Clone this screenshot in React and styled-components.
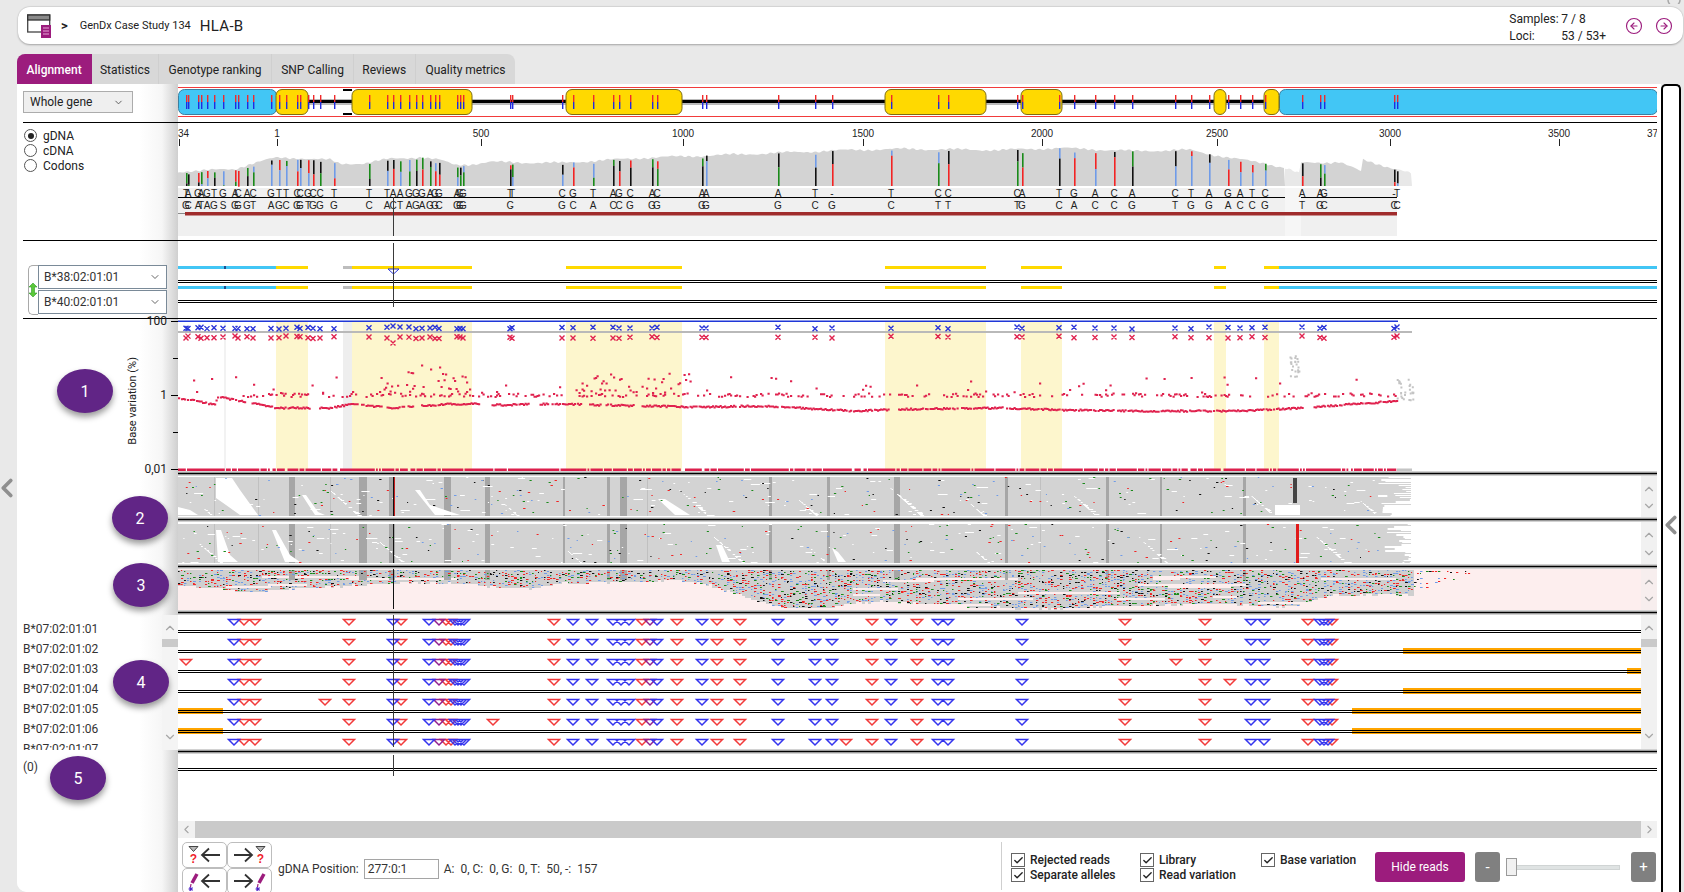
import React from "react";
import styled, { createGlobalStyle } from "styled-components";
import { Check, ChevronDown, ChevronLeft, ChevronRight, ChevronUp, CircleArrowLeft, CircleArrowRight } from "lucide-react";

const PURPLE = "#9c1c7d";
const CURSOR = 393;
const TRACK_W = 1479;

// x position + reference base + read base for each variant column
const VARIANTS = `186TG 188AC 198GA 201AT 207GA 214TG 223GS 235AG 238CG 247AG 253CT 271GA 279TG 286TC 297CG 300CG 308GT 313CG 320CG 334TG
369TC 387TA 393AC 400AT 409GA 416GG 422GA 430AG 435GG 439GC 457AG 460GG 463GG 510TC 512T- 562CG 573GC 593TA 613AC 619GC 630CG 652AG 657CG 702AG 706AG
778AG 815TC 832-G 891TC 938CT 948CT 1017CT 1022AG 1059TC 1074GA 1095AC 1114CC 1132AG 1175CT 1191TG 1209AG 1228GA 1240AC 1252TC 1265CG 1302AT 1320AG 1324GC 1394-C 1397TC`
  .split(/\s+/)
  .map((v) => ({ x: parseInt(v, 10), top: v.slice(-2, -1), bottom: v.slice(-1) }));

const EXONS = [
  [276, 308],
  [352, 472],
  [566, 682],
  [885, 986],
  [1021, 1062],
  [1214, 1226],
  [1264, 1279],
];

const TICKS = [
  [179, "34"],
  [277, "1"],
  [481, "500"],
  [683, "1000"],
  [863, "1500"],
  [1042, "2000"],
  [1217, "2500"],
  [1390, "3000"],
  [1559, "3500"],
];

const COVERAGE = [
  [178, 172], [186, 171], [215, 170], [235, 169], [250, 164], [262, 161], [275, 158], [300, 158], [330, 160], [340, 164],
  [365, 163], [390, 159], [420, 157], [440, 160], [455, 165], [475, 164], [490, 162], [560, 163], [640, 158], [750, 154],
  [850, 150], [900, 149], [1000, 150], [1060, 148], [1132, 151], [1190, 150], [1230, 158], [1264, 163], [1285, 168],
  [1300, 174], [1301, 163], [1340, 162], [1362, 172], [1363, 160], [1400, 170], [1412, 174],
];

const READ_ENVELOPE = [
  [178, 584], [250, 592], [290, 588], [330, 586], [400, 582], [470, 583], [520, 590], [560, 582], [680, 580], [700, 582],
  [780, 607], [820, 607], [880, 600], [960, 606], [1040, 608], [1100, 606], [1200, 603], [1290, 606], [1330, 594], [1411, 594],
  [1430, 584], [1440, 581], [1465, 577], [1470, 570],
];

const TRIANGLES = [
  [234, "b"], [244, "r"], [255, "r"], [349, "r"], [393, "b"], [401, "r"], [429, "b"], [439, "p"], [446, "r"], [451, "r"], [455, "b"],
  [458, "b"], [461, "b"], [464, "b"], [554, "r"], [573, "b"], [592, "b"], [613, "b"], [621, "b"], [629, "b"], [642, "r"], [650, "p"],
  [657, "b"], [677, "r"], [702, "b"], [717, "r"], [740, "r"], [778, "b"], [815, "b"], [832, "b"], [872, "r"], [891, "b"], [917, "r"],
  [938, "b"], [948, "b"], [1022, "b"], [1125, "r"], [1205, "r"], [1251, "b"], [1264, "b"], [1308, "r"], [1320, "b"], [1324, "b"],
  [1328, "b"], [1332, "r"],
];

const EXTRA_TRIANGLES = [[], [], [186, 1176], [1230], [325], [493], [846]];

const ALLELE_ROWS = ["B*07:02:01:01", "B*07:02:01:02", "B*07:02:01:03", "B*07:02:01:04", "B*07:02:01:05", "B*07:02:01:06", "B*07:02:01:07"];

const ORANGE_BARS = [
  [1403, 651],
  [1627, 671],
  [1403, 691],
  [1352, 711],
  [1352, 731],
];

const DARK_BARS = [
  [214, 1], [258, 1], [289, 6], [330, 1], [359, 8], [389, 6], [444, 7], [485, 5], [563, 2], [607, 3], [620, 7], [647, 1], [769, 3],
  [827, 3], [894, 6], [1005, 3], [1040, 1], [1106, 3], [1160, 2], [1243, 3],
];

const BLOBS_A = [
  "216,478 232,478 240,490 258,515 240,515 226,505 216,498",
  "178,507 190,510 198,515 178,515",
  "302,495 306,495 318,512 325,515 315,515",
  "415,490 420,490 430,505 460,515 435,515",
  "658,499 665,499 690,515 675,515",
  "1275,505 1300,505 1300,515 1275,515",
];

const BLOBS_B = [
  "216,530 221,530 230,555 238,562 218,562",
  "272,530 276,530 290,555 300,562 285,562",
  "716,545 722,545 730,562 722,562",
  "832,548 838,552 846,562 838,562",
];

const makeRandom = (seed) => () => {
  seed = (seed + 0x6d2b79f5) | 0;
  let t = Math.imul(seed ^ (seed >>> 15), 1 | seed);
  t = (t + Math.imul(t ^ (t >>> 7), 61 | t)) ^ t;
  return ((t ^ (t >>> 14)) >>> 0) / 4294967296;
};

const lerp = (table, x) => {
  for (let i = 1; i < table.length; i++) {
    if (x <= table[i][0]) {
      const [x0, y0] = table[i - 1];
      const [x1, y1] = table[i];
      return y0 + ((y1 - y0) * (x - x0)) / (x1 - x0 || 1);
    }
  }
  return table[table.length - 1][1];
};

const box = (x, y, w, h) => `M${x.toFixed(1)} ${y.toFixed(1)}h${w.toFixed(1)}v${h}h${(-w).toFixed(1)}z`;
const cross = (x, y) => `M${x - 2.5} ${y - 2.5}l5 5M${x + 2.5} ${y - 2.5}l-5 5`;

const coverageArea = (from, to) => {
  const points = [];
  for (let x = from; x <= to; x += 2) {
    const bump = Math.sin(x * 0.7) * 0.5 + Math.sin(x * 2.3) * 0.4 + Math.sin(x * 0.11) * 0.8;
    points.push(`${x},${(lerp(COVERAGE, x) + bump).toFixed(1)}`);
  }
  return `${from},186 ${points.join(" ")} ${to},186`;
};

const coverageBars = (() => {
  const random = makeRandom(11);
  const colors = ["#111", "#f22424", "#1a8a1a", "#6f9be8"];
  return VARIANTS.map(({ x }) => {
    const top = lerp(COVERAGE, x) + random() * 4;
    const split = top + 4 + random() * 12;
    const first = Math.floor(random() * 4);
    const second = (first + 1 + Math.floor(random() * 3)) % 4;
    return { x, top, split, upper: colors[first], lower: colors[second] };
  });
})();

const chartDots = (() => {
  const random = makeRandom(23);
  let red = "";
  let grey = "";
  let line = "";
  const lower = [
    [178, 397], [215, 404], [216, 396], [240, 400], [260, 404], [276, 407], [330, 407], [350, 403], [390, 407], [450, 403],
    [472, 403], [500, 404], [560, 403], [640, 405], [700, 406], [760, 405], [800, 407], [850, 410], [920, 408], [1000, 407],
    [1060, 409], [1140, 410], [1240, 410], [1300, 407], [1397, 400],
  ];
  let gapUntil = 0;
  for (let x = 178; x < 1397; x += 1.5) {
    if (x > gapUntil && random() < 0.012) gapUntil = x + 3 + random() * 9;
    if (x > gapUntil && random() < 0.9) red += box(x, lerp(lower, x) + (random() - 0.5) * 1.6, 2.2, 2);
    if (x > 240 && random() < 0.34) red += box(x, 392.5 + random() * 3.5, 2.2, 2);
    if (random() < 0.075) red += box(x, 376 + random() * 18, 2.2, 2);
    const clouds = (x > 378 && x < 472 ? 0.95 : 0) + (x > 570 && x < 690 ? 0.8 : 0);
    if (random() < clouds * 0.55) {
      const reach = x < 472 ? 38 : 20;
      const peak = x < 472 ? 1 - Math.abs(x - 430) / 60 : 1;
      red += box(x, 392 - random() * reach * Math.max(peak, 0.2), 2.2, 2);
    }
    if (random() < 0.88) line += box(x, 468.5, 1.8, 3);
  }
  for (let i = 0; i < 22; i++) grey += box(1289 + random() * 11, 354 + random() * 22, 2, 2);
  for (let i = 0; i < 26; i++) grey += box(1396 + random() * 17, 378 + random() * 22, 2, 2);
  return { red, grey, line };
})();

const chartCrosses = (() => {
  const random = makeRandom(31);
  let blue = "";
  let red = "";
  VARIANTS.forEach(({ x }) => {
    const shift = x === CURSOR ? -2 : random() * 2 - 1;
    blue += cross(x, 328 + shift);
    red += cross(x, x === CURSOR ? 343 : 337 + random() * 2.5 - 1);
  });
  return { blue, red };
})();

const makeReads = (seed, bottom) => {
  const random = makeRandom(seed);
  const height = 39;
  const top = bottom - height;
  let white = "";
  const dots = { "#f22424": "", "#111": "", "#1a8a1a": "", "#6f9be8": "" };
  const colors = Object.keys(dots);
  for (let i = 0; i < 130; i++) {
    white += box(178 + random() * 1230, top + Math.floor(random() * height), 1 + random() * random() * 12, 1);
  }
  // faint diagonal gaps where the read starts shift along the gene
  for (let start = 200; start < 1400; start += 70 + random() * 120) {
    const from = top + 8 + Math.floor(random() * 22);
    for (let y = from; y < bottom; y += 1) {
      if (random() < 0.35) continue;
      const w = 1 + random() * (y - from) * 0.28;
      white += box(start + (y - from) * 1.1, y, w, 1);
    }
  }
  for (let y = top; y < bottom; y += 2) {
    const w = 1 + random() * 34;
    white += box(1411 - w, y, w, 1 + Math.round(random()));
  }
  for (let i = 0; i < 210; i++) {
    const color = colors[Math.floor(random() * 4)];
    dots[color] += box(178 + random() * 1200, top + Math.floor(random() * height), 1 + random() * 1.5, 1);
  }
  return { white, dots, top };
};

const readsA = makeReads(41, 516);
const readsB = makeReads(52, 563);

const readsC = (() => {
  const random = makeRandom(63);
  let grey = "";
  const dots = { "#f22424": "", "#111": "", "#1a8a1a": "", "#6f9be8": "" };
  const colors = ["#f22424", "#f22424", "#111", "#1a8a1a", "#6f9be8", "#6f9be8"];
  for (let y = 570; y < 609; y += 2) {
    let gapFrom = -1;
    let gapTo = -1;
    const tailRow = random() < 0.45;
    for (let x = 178; x < 1470; x += 3) {
      if (x > gapTo && random() < 0.007) {
        gapFrom = x;
        gapTo = x + 20 + random() * 90;
      }
      if (y > lerp(READ_ENVELOPE, x) + (random() - 0.5) * 2) continue;
      if (x >= gapFrom && x < gapTo && y > 574) continue;
      if (x > 1411 && !tailRow) continue;
      if (x <= 1411) grey += box(x, y, 3, 2);
      const depth = x > 1411 ? 0.35 : 0.5;
      if (random() < depth) {
        const color = colors[Math.floor(random() * colors.length)];
        dots[color] += box(x, y + (random() < 0.5 ? 0 : 1), 1 + random() * 2, 1);
      }
    }
  }
  return { grey, dots };
})();

const triangle = (x, y) => `M${x - 5.5} ${y}h11l-5.500 5.500z`;

const trianglesByColor = (() => {
  const paths = { r: "", b: "", p: "" };
  for (let row = 0; row < 7; row++) {
    const y = 619.5 + row * 20;
    TRIANGLES.forEach(([x, c]) => {
      paths[c] += triangle(x, y);
    });
  }
  EXTRA_TRIANGLES.forEach((xs, row) => {
    xs.forEach((x) => {
      paths.r += triangle(x, 619.5 + row * 20);
    });
  });
  return paths;
})();

const GlobalStyle = createGlobalStyle`
  html, body {
    margin: 0;
    background: #e9e9e9;
    overflow: hidden;
  }
  body {
    font-family: "Roboto", "Liberation Sans", sans-serif;
    font-size: 12px;
    color: #222;
  }
`;

const Page = styled.div`
  position: relative;
  width: 1684px;
  height: 892px;
  overflow: hidden;
  background: #e9e9e9;
`;

const Header = styled.header`
  display: flex;
  align-items: center;
  height: 37px;
  margin: 7px 1px 0 18px;
  padding: 0 10px 0 9px;
  background: #fff;
  border-radius: 12px;
  box-shadow: 0 1px 2px rgba(0, 0, 0, 0.3), 0 -1px 1px rgba(0, 0, 0, 0.08);
`;

const Crumb = styled.span`
  margin-left: 9px;
  font-size: 13px;
  font-weight: 700;
`;

const CaseName = styled.span`
  margin-left: 12px;
  font-size: 11px;
`;

const LocusName = styled.span`
  margin-left: 9px;
  font-size: 15px;
  letter-spacing: 0.3px;
`;

const Counters = styled.div`
  display: grid;
  grid-template-columns: 52px auto;
  grid-auto-rows: 17px;
  align-items: center;
  margin-left: auto;
  padding-top: 3px;
  font-size: 12px;
`;

const NavRound = styled.span`
  display: flex;
  margin-left: ${(p) => p.$gap}px;
  color: ${PURPLE};
`;

const Tabs = styled.nav`
  display: flex;
  width: 498px;
  height: 30px;
  margin: 10px 0 0 17px;
  background: #d8d8d8;
  border-radius: 8px 8px 0 0;
`;

const Tab = styled.span`
  display: flex;
  align-items: center;
  justify-content: center;
  width: ${(p) => p.$w}px;
  padding-top: 1px;
  font-size: 12px;
  color: ${(p) => (p.$active ? "#fff" : "#222")};
  font-weight: ${(p) => (p.$active ? 500 : 400)};
  background: ${(p) => (p.$active ? PURPLE : "transparent")};
  border-radius: ${(p) => (p.$active ? "8px 0 0 0" : "0")};
  border-right: 1px solid ${(p) => (p.$active ? "transparent" : "#cfcfcf")};
  &:last-child {
    border-right: 0;
  }
`;

const Body = styled.div`
  display: flex;
  height: 808px;
`;

const Gutter = styled.div`
  display: flex;
  align-items: center;
  justify-content: center;
  width: 17px;
  padding-right: 3px;
  box-sizing: border-box;
  color: #8f8f8f;
  svg {
    flex-shrink: 0;
  }
`;

const Workspace = styled.div`
  display: flex;
  width: 1644px;
  background: #fff;
  border-radius: 0 0 0 10px;
  overflow: hidden;
`;

const LeftColumn = styled.aside`
  display: flex;
  flex-direction: column;
  width: 161px;
  flex-shrink: 0;
  background: linear-gradient(90deg, #fff 76%, #f6f6f6 90%, #cfcfcf 100%);
`;

const LeftBlock = styled.div`
  height: ${(p) => p.$h}px;
  margin-left: 6px;
  flex-shrink: 0;
  border-bottom: 1px solid #000;
`;

const GeneSelect = styled.div`
  display: flex;
  align-items: center;
  justify-content: space-between;
  width: 110px;
  height: 22px;
  margin-top: 7px;
  padding: 0 8px 0 6px;
  box-sizing: border-box;
  background: #efefef;
  border: 1px solid #acacac;
  font-size: 12px;
`;

const RadioGroup = styled.div`
  display: flex;
  flex-direction: column;
  padding: 5px 0 0 1px;
`;

const RadioRow = styled.label`
  display: flex;
  align-items: center;
  gap: 6px;
  height: 15px;
  font-size: 12px;
`;

const RadioMark = styled.span`
  display: flex;
  align-items: center;
  justify-content: center;
  width: 11px;
  height: 11px;
  border: 1px solid #555;
  border-radius: 50%;
  &::after {
    content: "";
    width: 6px;
    height: 6px;
    border-radius: 50%;
    background: ${(p) => (p.$on ? "#222" : "transparent")};
  }
`;

const PairRow = styled.div`
  display: flex;
  margin: 24px 0 0 5px;
`;

const PairBracket = styled.div`
  position: relative;
  width: 9px;
  height: 48px;
  border: 1px solid #a9a9a9;
  border-right: 0;
  border-radius: 5px 0 0 5px;
`;

const SwapIcon = styled.svg`
  position: absolute;
  left: -1px;
  top: 17px;
`;

const PairSelects = styled.div`
  display: flex;
  flex-direction: column;
  gap: 1px;
`;

const AlleleSelect = styled.div`
  display: flex;
  align-items: center;
  justify-content: space-between;
  width: 129px;
  height: 24px;
  padding: 0 5px 0 5px;
  box-sizing: border-box;
  border: 1px solid #7a8a98;
  font-size: 12px;
  color: #333;
  background: #fff;
`;

const AxisBlock = styled.div`
  display: flex;
  justify-content: flex-end;
  align-items: center;
  height: 164px;
  margin-top: -6px;
`;

const AxisTitle = styled.span`
  writing-mode: vertical-rl;
  transform: rotate(180deg);
  width: 14px;
  margin-top: 12px;
  font-size: 11px;
  white-space: nowrap;
`;

const AxisColumn = styled.div`
  display: flex;
  flex-direction: column;
  justify-content: space-between;
  width: 38px;
  height: 100%;
`;

const AxisRow = styled.div`
  display: flex;
  align-items: center;
  justify-content: flex-end;
  gap: 4px;
  height: 16px;
  font-size: 12px;
  &::after {
    content: "";
    width: ${(p) => (p.$minor ? 5 : 7)}px;
    height: 1px;
    background: #000;
  }
`;

const LeftSpacer = styled.div`
  flex-shrink: 0;
  height: ${(p) => p.$h}px;
`;

const ListBlock = styled.div`
  display: flex;
  flex-shrink: 0;
  height: 135px;
  margin-left: 6px;
`;

const AlleleList = styled.div`
  flex: 1;
  padding-top: 4px;
  overflow: hidden;
`;

const AlleleName = styled.div`
  display: flex;
  align-items: center;
  height: 20px;
  font-size: 12px;
  color: #333;
`;

const ScrollStrip = styled.div`
  display: flex;
  flex-direction: column;
  align-items: center;
  justify-content: space-between;
  flex-shrink: 0;
  width: 16px;
  padding: ${(p) => (p.$list ? "6px 0" : "6px 0 4px")};
  box-sizing: border-box;
  background: ${(p) => p.$bg || "#f1f1f1"};
  color: #a6a6a6;
`;

const ScrollGroup = styled.div`
  display: flex;
  flex-direction: column;
  align-items: center;
  width: 100%;
`;

const ScrollThumb = styled.span`
  align-self: stretch;
  height: 8px;
  margin-top: 4px;
  background: #cacaca;
`;

const LeftNote = styled.div`
  margin: 10px 0 0 6px;
  font-size: 12px;
  color: #333;
`;

const TrackColumn = styled.main`
  display: flex;
  flex-direction: column;
  width: ${TRACK_W}px;
  flex-shrink: 0;
`;

const TrackSvg = styled.svg`
  display: block;
  flex-shrink: 0;
`;

const TrackRule = styled.div`
  flex-shrink: 0;
  height: 1px;
  background: #000;
`;

const Splitter = styled.div`
  flex-shrink: 0;
  height: 5px;
  background: linear-gradient(#d2d2d2 0 1px, #9a9a9a 1px 2px, #000 2px 3px, #9a9a9a 3px 4px, #d2d2d2 4px 5px);
`;

const TrackRow = styled.div`
  display: flex;
  flex-shrink: 0;
  background: ${(p) => p.$bg || "#fff"};
`;

const TrackFill = styled.div`
  flex: 1;
  min-height: 0;
  background: #fff;
`;

const HScroll = styled.div`
  display: flex;
  flex-shrink: 0;
  height: 17px;
  background: #cacaca;
  color: #a6a6a6;
`;

const HScrollEnd = styled.span`
  display: flex;
  align-items: center;
  justify-content: center;
  width: ${(p) => p.$w}px;
  background: #f1f1f1;
  margin-left: ${(p) => (p.$right ? "auto" : 0)};
`;

const Toolbar = styled.div`
  display: flex;
  flex-shrink: 0;
  height: 54px;
  background: #fff;
  overflow: hidden;
`;

const NavGrid = styled.div`
  display: grid;
  grid-template-columns: 45px 45px;
  grid-auto-rows: 26px;
  margin: 4px 0 0 4px;
`;

const NavButton = styled.button`
  display: flex;
  align-items: center;
  justify-content: center;
  gap: 1px;
  padding: 0;
  background: #fff;
  border: 1px solid #bdbdbd;
  border-radius: 5px;
  color: #333;
`;

const PositionGroup = styled.div`
  display: flex;
  align-items: center;
  height: 54px;
  padding-top: 8px;
  box-sizing: border-box;
  margin-left: 6px;
  font-size: 12px;
  color: #333;
`;

const PositionInput = styled.div`
  display: flex;
  align-items: center;
  width: 75px;
  height: 20px;
  margin: 0 5px 0 5px;
  padding-left: 3px;
  box-sizing: border-box;
  border: 1px solid #a5a5a5;
`;

const Stats = styled.span`
  white-space: pre;
`;

const ToolbarRight = styled.div`
  display: flex;
  align-items: center;
  width: 656px;
  height: 48px;
  margin: 4px 0 0 auto;
  padding-left: 9px;
  box-sizing: border-box;
  border-left: 1px solid #cfcfcf;
`;

const CheckGrid = styled.div`
  display: grid;
  grid-template-columns: 129px 121px 114px;
  grid-auto-rows: 15px;
  margin-top: 3px;
`;

const CheckRow = styled.label`
  display: flex;
  align-items: center;
  gap: 5px;
  font-size: 12px;
  font-weight: 500;
  color: #222;
`;

const CheckMark = styled.span`
  display: flex;
  align-items: center;
  justify-content: center;
  width: 12px;
  height: 12px;
  border: 1px solid #666;
  color: #222;
`;

const HideButton = styled.button`
  width: 90px;
  height: 30px;
  margin-top: 2px;
  border: 0;
  border-radius: 3px;
  background: ${PURPLE};
  color: #fff;
  font: inherit;
  font-size: 12px;
`;

const ZoomButton = styled.button`
  width: 25px;
  height: 30px;
  margin: 2px ${(p) => p.$mr || 0}px 0 ${(p) => p.$ml || 0}px;
  padding: 0;
  border: 0;
  border-radius: 3px;
  background: #808080;
  color: #fff;
  font: inherit;
  font-size: 15px;
`;

const SliderTrack = styled.div`
  position: relative;
  display: flex;
  align-items: center;
  width: 114px;
  height: 18px;
  margin-top: 2px;
  &::before {
    content: "";
    flex: 1;
    height: 3px;
    background: #dfe3e3;
    border: 1px solid #d0d4d4;
  }
`;

const SliderThumb = styled.span`
  position: absolute;
  left: 0;
  top: 0;
  width: 11px;
  height: 18px;
  box-sizing: border-box;
  background: #f1f1f1;
  border: 1px solid #9a9a9a;
`;

const Rail = styled.div`
  display: flex;
  justify-content: center;
  width: 20px;
  padding-top: 424px;
  box-sizing: border-box;
  background: #fff;
  border: 2px solid #000;
  border-bottom: 0;
  border-radius: 5px 5px 0 0;
  color: #8f8f8f;
  svg {
    flex-shrink: 0;
  }
`;

const Badge = styled.div`
  position: absolute;
  left: ${(p) => p.$x - 28}px;
  top: ${(p) => p.$y - 22}px;
  display: flex;
  align-items: center;
  justify-content: center;
  width: 56px;
  height: 44px;
  border-radius: 50%;
  background: #612586;
  color: #fff;
  font-size: 16px;
  box-shadow: 0 4px 6px rgba(0, 0, 0, 0.4);
`;

const CornerMark = styled.svg`
  position: absolute;
  right: 3px;
  top: 0;
`;

const Cursor = ({ from, to }) => <rect x={CURSOR} y={from} width="1" height={to - from} fill="#3a3a3a" />;

const Exon = ({ from, to }) => <rect x={from} y="89.500" width={to - from} height="25" rx="6" fill="#ffd900" stroke="#7c6c14" />;

const GeneTrack = () => (
  <TrackSvg width={TRACK_W} height="38" viewBox="178 84 1479 38">
    <rect x="178" y="87" width="1479" height="1" fill="#f23b3b" />
    <rect x="178" y="116" width="1479" height="1" fill="#f23b3b" />
    <rect x="308" y="99" width="971" height="6" fill="#bbb" />
    <rect x="308" y="100" width="971" height="3" fill="#000" />
    <rect x="343" y="89" width="9" height="2" fill="#000" />
    <rect x="343" y="113" width="9" height="2" fill="#000" />
    <rect x="178.500" y="89.500" width="98" height="25" rx="6" fill="#42c6f5" stroke="#3a7fa0" />
    <rect x="1279.500" y="89.500" width="378" height="25" rx="6" fill="#42c6f5" stroke="#3a7fa0" />
    {EXONS.map(([from, to]) => (
      <Exon key={from} from={from} to={to} />
    ))}
    {VARIANTS.map(({ x }) => (
      <g key={x}>
        <rect x={x} y="95" width="1.400" height="7" fill="#ef2b2b" />
        <rect x={x} y="102" width="1.400" height="7" fill="#1f2be0" />
      </g>
    ))}
  </TrackSvg>
);

const SequenceTrack = () => (
  <TrackSvg width={TRACK_W} height="117" viewBox="178 123 1479 117">
    <g fontFamily="Liberation Sans" fontSize="10" fill="#222">
      {TICKS.map(([x, label]) => (
        <g key={label}>
          <text x={x === 179 ? 178 : x} y="137" textAnchor={x === 179 ? "start" : "middle"}>
            {label}
          </text>
          <rect x={x} y="139" width="1" height="7" fill="#222" />
        </g>
      ))}
      <text x="1647" y="137">37</text>
    </g>
    <polygon points={coverageArea(178, 1285)} fill="#d3d3d3" />
    <polygon points={coverageArea(1285, 1301)} fill="#e8e8e8" />
    <polygon points={coverageArea(1301, 1397)} fill="#d3d3d3" />
    <polygon points={coverageArea(1397, 1412)} fill="#e8e8e8" />
    {coverageBars.map((b) => (
      <g key={b.x}>
        <rect x={b.x} y={b.top} width="1.600" height={b.split - b.top} fill={b.upper} />
        <rect x={b.x} y={b.split} width="1.600" height={186 - b.split} fill={b.lower} />
      </g>
    ))}
    <rect x="178" y="188" width="1107" height="48" fill="#f0f0f0" />
    <rect x="1285" y="188" width="16" height="48" fill="#f6f6f6" />
    <rect x="1301" y="188" width="96" height="48" fill="#f0f0f0" />
    <g fontFamily="Liberation Sans" fontSize="10" fill="#222" textAnchor="middle">
      {VARIANTS.map(({ x, top, bottom }) => (
        <g key={x}>
          <text x={x} y="197">{top}</text>
          <text x={x} y="209">{bottom}</text>
        </g>
      ))}
    </g>
    <rect x="178" y="197" width="1107" height="1" fill="#000" />
    <rect x="1301" y="197" width="96" height="1" fill="#000" />
    <rect x="178" y="213" width="7" height="1" fill="#8a8a8a" />
    <rect x="185" y="212" width="1212" height="3.500" fill="#a02c2c" />
    <Cursor from={197} to={236} />
  </TrackSvg>
);

const AlleleBar = ({ y }) => (
  <g>
    <rect x="178" y={y} width="98" height="3" fill="#42c6f5" />
    <rect x="224" y={y} width="2" height="3" fill="#1d4f8f" />
    <rect x="343" y={y} width="9" height="3" fill="#bdbdbd" />
    <rect x="1279" y={y} width="378" height="3" fill="#42c6f5" />
    {EXONS.map(([from, to]) => (
      <rect key={from} x={from} y={y} width={to - from} height="3" fill="#ffd900" />
    ))}
    <rect x="178" y={y + 14} width="1479" height="1" fill="#000" />
    <rect x="178" y={y + 16} width="1479" height="1" fill="#000" />
  </g>
);

const AlleleTrack = () => (
  <TrackSvg width={TRACK_W} height="77" viewBox="178 241 1479 77">
    <AlleleBar y={266} />
    <AlleleBar y={286} />
    <path d="M388 269h11l-5.500 5z" fill="none" stroke="#2a35d8" strokeWidth="1" />
    <Cursor from={243} to={307} />
  </TrackSvg>
);

const ChartTrack = () => (
  <TrackSvg width={TRACK_W} height="152" viewBox="178 319 1479 152">
    <rect x="224" y="321" width="2" height="150" fill="#f2f2f2" />
    <rect x="343" y="321" width="9" height="150" fill="#eeeeee" />
    {EXONS.map(([from, to]) => (
      <rect key={from} x={from} y="321" width={to - from} height="150" fill="#fdf6cd" />
    ))}
    <rect x="178" y="320.500" width="1220" height="1.500" fill="#2038d8" />
    <rect x="178" y="331" width="1234" height="2" fill="#b9b9b9" />
    <path d={chartCrosses.blue} fill="none" stroke="#2a35d8" strokeWidth="1.400" />
    <path d={chartCrosses.red} fill="none" stroke="#e0224e" strokeWidth="1.400" />
    <path d={chartDots.red} fill="#e0224e" />
    <path d={chartDots.grey} fill="#c4c4c4" />
    <path d={chartDots.line} fill="#dc1f4c" />
    <rect x="1397" y="468.500" width="15" height="3" fill="#c4c4c4" />
  </TrackSvg>
);

const ReadsTrack = ({ reads, bottom, height, blobs, accent, children }) => (
  <TrackSvg width="1463" height={height} viewBox={`178 ${bottom - height} 1463 ${height}`}>
    <rect x="178" y={reads.top} width="1233" height="39" fill="#d3d3d3" />
    {DARK_BARS.map(([x, w]) => (
      <rect key={x} x={x} y={reads.top} width={w} height="39" fill={w > 1 ? "#a6a6a6" : "#c0c0c0"} />
    ))}
    {blobs.map((points) => (
      <polygon key={points} points={points} fill="#fff" />
    ))}
    <path d={reads.white} fill="#fff" />
    {Object.entries(reads.dots).map(([color, d]) => (
      <path key={color} d={d} fill={color} />
    ))}
    {children}
    <rect x={CURSOR} y={reads.top} width="1" height="39" fill="#111" />
    {accent && <rect x={CURSOR + 1} y={reads.top} width="1" height="39" fill="#c81f1f" />}
  </TrackSvg>
);

const ReadsScroll = ({ bg }) => (
  <ScrollStrip $bg={bg}>
    <ChevronUp size={14} />
    <ChevronDown size={14} />
  </ScrollStrip>
);

const MappedReads = () => (
  <TrackSvg width="1463" height="41" viewBox="178 569 1463 41">
    <path d={readsC.grey} fill="#cfcfcf" />
    {DARK_BARS.filter(([, w]) => w > 2).map(([x, w]) => (
      <rect key={x} x={x} y="570" width={w} height="10" fill="#a6a6a6" />
    ))}
    {Object.entries(readsC.dots).map(([color, d]) => (
      <path key={color} d={d} fill={color} />
    ))}
    <rect x={CURSOR} y="569" width="1" height="40" fill="#111" />
  </TrackSvg>
);

const TriangleList = () => (
  <TrackSvg width="1463" height="134" viewBox="178 615 1463 134">
    {ORANGE_BARS.map(([x, y]) => (
      <rect key={y} x={x} y={y - 3} width={1641 - x} height="6" fill="#ffa500" />
    ))}
    <rect x="178" y="708" width="45" height="6" fill="#ffa500" />
    <rect x="178" y="728" width="45" height="6" fill="#ffa500" />
    {[631, 651, 671, 691, 711, 731].map((y) => (
      <g key={y}>
        <rect x="178" y={y - 1} width="1463" height="1" fill="#000" />
        <rect x="178" y={y + 1} width="1463" height="1" fill="#000" />
      </g>
    ))}
    <path d={trianglesByColor.r} fill="none" stroke="#f23a3a" strokeWidth="1.500" />
    <path d={trianglesByColor.p} fill="none" stroke="#93208f" strokeWidth="1.500" />
    <path d={trianglesByColor.b} fill="none" stroke="#3535ee" strokeWidth="1.500" />
    <Cursor from={615} to={747} />
  </TrackSvg>
);

const EmptyTrack = () => (
  <TrackSvg width={TRACK_W} height="23" viewBox="178 754 1479 23">
    <rect x="178" y="768" width="1479" height="1" fill="#000" />
    <rect x="178" y="770" width="1479" height="1" fill="#000" />
    <Cursor from={755} to={776} />
  </TrackSvg>
);

const NavArrow = ({ flip }) => (
  <svg width="21" height="16" viewBox="0 0 21 16" aria-hidden="true">
    <path
      d={flip ? "M1 8h18M12 1.500L19 8l-7 6.500" : "M20 8H2M9 1.500L2 8l7 6.500"}
      fill="none"
      stroke="#333"
      strokeWidth="1.800"
    />
  </svg>
);

const QueryIcon = () => (
  <svg width="11" height="21" viewBox="0 0 11 21" aria-hidden="true">
    <path d="M1 1.500h9l-4.500 5z" fill="#b9b9b9" stroke="#444" strokeWidth="1" />
    <text x="5.500" y="17.500" textAnchor="middle" fontFamily="Liberation Sans" fontSize="12" fontWeight="700" fill="#f01f2e">?</text>
  </svg>
);

const PenIcon = () => (
  <svg width="11" height="21" viewBox="0 0 11 21" aria-hidden="true">
    <path d="M4 12L9 3" stroke={PURPLE} strokeWidth="3.500" fill="none" />
    <path d="M3 13l-.5 3" stroke={PURPLE} strokeWidth="1.200" />
    <path d="M.5 18h4.500M2.700 16v4M1 16.500l3.500 3M4.500 16.500l-3.500 3" stroke="#4a20c8" strokeWidth="1" />
  </svg>
);

const Checkbox = ({ label }) => (
  <CheckRow>
    <CheckMark>
      <Check size={11} strokeWidth={3} />
    </CheckMark>
    {label}
  </CheckRow>
);

const App = () => (
  <Page>
    <GlobalStyle />
    <CornerMark width="14" height="4" viewBox="0 0 14 4">
      <path d="M1 0a6 6 0 0 0 12 0" fill="none" stroke="#a8a8a8" strokeWidth="1.500" />
    </CornerMark>
    <Header>
      <svg width="25" height="24" viewBox="0 0 25 24" aria-hidden="true">
        <rect x="0.700" y="1" width="22" height="17" fill="#fff" stroke="#444" strokeWidth="1.300" />
        <rect x="0.700" y="1" width="22" height="5" fill="#8a8a8a" stroke="#333" strokeWidth="1.300" />
        <rect x="14" y="11" width="10" height="13" fill={PURPLE} />
        <path d="M16 14h6M16 17h6M16 20h6" stroke="#e6a8d8" strokeWidth="1" />
      </svg>
      <Crumb>&gt;</Crumb>
      <CaseName>GenDx Case Study 134</CaseName>
      <LocusName>HLA-B</LocusName>
      <Counters>
        <span>Samples:</span>
        <span>7 / 8</span>
        <span>Loci:</span>
        <span>53 / 53+</span>
      </Counters>
      <NavRound $gap={19}>
        <CircleArrowLeft size={18} strokeWidth={1.5} />
      </NavRound>
      <NavRound $gap={12}>
        <CircleArrowRight size={18} strokeWidth={1.5} />
      </NavRound>
    </Header>
    <Tabs>
      <Tab $w={75} $active>Alignment</Tab>
      <Tab $w={66}>Statistics</Tab>
      <Tab $w={114}>Genotype ranking</Tab>
      <Tab $w={81}>SNP Calling</Tab>
      <Tab $w={62}>Reviews</Tab>
      <Tab $w={100}>Quality metrics</Tab>
    </Tabs>
    <Body>
      <Gutter>
        <ChevronLeft size={30} strokeWidth={3} />
      </Gutter>
      <Workspace>
        <LeftColumn>
          <LeftBlock $h={38}>
            <GeneSelect>
              Whole gene
              <ChevronDown size={11} color="#555" />
            </GeneSelect>
          </LeftBlock>
          <LeftBlock $h={117}>
            <RadioGroup>
              <RadioRow><RadioMark $on />gDNA</RadioRow>
              <RadioRow><RadioMark />cDNA</RadioRow>
              <RadioRow><RadioMark />Codons</RadioRow>
            </RadioGroup>
          </LeftBlock>
          <LeftBlock $h={77}>
            <PairRow>
              <PairBracket>
                <SwapIcon width="10" height="14" viewBox="0 0 10 14" aria-hidden="true">
                  <path d="M5 0l4 4H6.500v6H9l-4 4-4-4h2.500V4H1z" fill="#5bc83a" stroke="#2f9a2a" strokeWidth="0.600" />
                </SwapIcon>
              </PairBracket>
              <PairSelects>
                <AlleleSelect>
                  B*38:02:01:01
                  <ChevronDown size={12} color="#666" />
                </AlleleSelect>
                <AlleleSelect>
                  B*40:02:01:01
                  <ChevronDown size={12} color="#666" />
                </AlleleSelect>
              </PairSelects>
            </PairRow>
          </LeftBlock>
          <AxisBlock>
            <AxisTitle>Base variation (%)</AxisTitle>
            <AxisColumn>
              <AxisRow>100</AxisRow>
              <AxisRow $minor />
              <AxisRow>1</AxisRow>
              <AxisRow $minor />
              <AxisRow>0,01</AxisRow>
            </AxisColumn>
          </AxisBlock>
          <LeftSpacer $h={138} />
          <ListBlock>
            <AlleleList>
              {ALLELE_ROWS.map((name) => (
                <AlleleName key={name}>{name}</AlleleName>
              ))}
            </AlleleList>
            <ScrollStrip $list $bg="#f4f4f4">
              <ScrollGroup>
                <ChevronUp size={14} />
                <ScrollThumb />
              </ScrollGroup>
              <ChevronDown size={14} />
            </ScrollStrip>
          </ListBlock>
          <LeftNote>(0)</LeftNote>
        </LeftColumn>
        <TrackColumn>
          <GeneTrack />
          <TrackRule />
          <SequenceTrack />
          <TrackRule />
          <AlleleTrack />
          <TrackRule />
          <ChartTrack />
          <Splitter />
          <TrackRow>
            <ReadsTrack reads={readsA} bottom={517} height={41} blobs={BLOBS_A} accent>
              <rect x="1293" y="478" width="4" height="25" fill="#444" />
            </ReadsTrack>
            <ReadsScroll />
          </TrackRow>
          <Splitter />
          <TrackRow>
            <ReadsTrack reads={readsB} bottom={564} height={42} blobs={BLOBS_B}>
              <rect x="1296" y="524" width="3" height="39" fill="#e01a1a" />
            </ReadsTrack>
            <ReadsScroll />
          </TrackRow>
          <Splitter />
          <TrackRow $bg="#fdeeee">
            <MappedReads />
            <ReadsScroll bg="#f7eeee" />
          </TrackRow>
          <Splitter />
          <TrackRow>
            <TriangleList />
            <ScrollStrip $list>
              <ScrollGroup>
                <ChevronUp size={14} />
                <ScrollThumb />
              </ScrollGroup>
              <ChevronDown size={14} />
            </ScrollStrip>
          </TrackRow>
          <Splitter />
          <EmptyTrack />
          <TrackFill />
          <HScroll>
            <HScrollEnd $w={17}>
              <ChevronLeft size={13} />
            </HScrollEnd>
            <HScrollEnd $w={16} $right>
              <ChevronRight size={13} />
            </HScrollEnd>
          </HScroll>
          <Toolbar>
            <NavGrid>
              <NavButton>
                <QueryIcon />
                <NavArrow />
              </NavButton>
              <NavButton>
                <NavArrow flip />
                <QueryIcon />
              </NavButton>
              <NavButton>
                <PenIcon />
                <NavArrow />
              </NavButton>
              <NavButton>
                <NavArrow flip />
                <PenIcon />
              </NavButton>
            </NavGrid>
            <PositionGroup>
              gDNA Position:
              <PositionInput>277:0:1</PositionInput>
              <Stats>A:  0, C:  0, G:  0, T:  50, -:  157</Stats>
            </PositionGroup>
            <ToolbarRight>
              <CheckGrid>
                <Checkbox label="Rejected reads" />
                <Checkbox label="Library" />
                <Checkbox label="Base variation" />
                <Checkbox label="Separate alleles" />
                <Checkbox label="Read variation" />
              </CheckGrid>
              <HideButton>Hide reads</HideButton>
              <ZoomButton $ml={10} $mr={6}>-</ZoomButton>
              <SliderTrack>
                <SliderThumb />
              </SliderTrack>
              <ZoomButton $ml={11}>+</ZoomButton>
            </ToolbarRight>
          </Toolbar>
        </TrackColumn>
      </Workspace>
      <Rail>
        <ChevronLeft size={30} strokeWidth={3} />
      </Rail>
    </Body>
    <Badge $x={85} $y={391}>1</Badge>
    <Badge $x={140} $y={518}>2</Badge>
    <Badge $x={141} $y={585}>3</Badge>
    <Badge $x={141} $y={682}>4</Badge>
    <Badge $x={78} $y={778}>5</Badge>
  </Page>
);

export default App;
